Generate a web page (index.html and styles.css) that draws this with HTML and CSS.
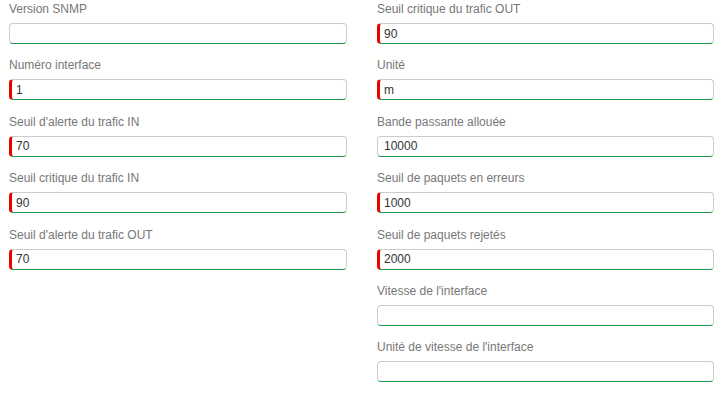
FILE: index.html
```html
<!DOCTYPE html>
<html lang="fr">
<head>
    <meta charset="UTF-8">
    <title>Interface SNMP</title>
    <link rel="stylesheet" href="styles.css">
</head>
<body>

    <!-- Formulaire interface -->
    <form class="form-grid">
        <div class="form-col">
            <div class="form-group">
                <label>Version SNMP</label>
                <input type="text" value="">
            </div>
            <div class="form-group">
                <label>Numéro interface</label>
                <input type="text" class="required" value="1">
            </div>
            <div class="form-group">
                <label>Seuil d'alerte du trafic IN</label>
                <input type="text" class="required" value="70">
            </div>
            <div class="form-group">
                <label>Seuil critique du trafic IN</label>
                <input type="text" class="required" value="90">
            </div>
            <div class="form-group">
                <label>Seuil d'alerte du trafic OUT</label>
                <input type="text" class="required" value="70">
            </div>
        </div>

        <div class="form-col">
            <div class="form-group">
                <label>Seuil critique du trafic OUT</label>
                <input type="text" class="required" value="90">
            </div>
            <div class="form-group">
                <label>Unité</label>
                <input type="text" class="required" value="m">
            </div>
            <div class="form-group">
                <label>Bande passante allouée</label>
                <input type="text" value="10000">
            </div>
            <div class="form-group">
                <label>Seuil de paquets en erreurs</label>
                <input type="text" class="required" value="1000">
            </div>
            <div class="form-group">
                <label>Seuil de paquets rejetés</label>
                <input type="text" class="required" value="2000">
            </div>
            <div class="form-group">
                <label>Vitesse de l'interface</label>
                <input type="text" value="">
            </div>
            <div class="form-group">
                <label>Unité de vitesse de l'interface</label>
                <input type="text" value="">
            </div>
        </div>
    </form>

</body>
</html>
```

FILE: styles.css
```css
* {
    margin: 0;
    padding: 0;
    box-sizing: border-box;
}

body {
    font-family: "Liberation Sans", Arial, sans-serif;
    font-size: 12px;
    background-color: #fff;
    color: #333;
}

/* Two column form */
.form-grid {
    display: grid;
    grid-template-columns: 338px 337px;
    column-gap: 30px;
    padding: 1px 11px 0 9px;
}

.form-group {
    display: flex;
    flex-direction: column;
    margin-bottom: 13.4px;
}

.form-group label {
    display: block;
    line-height: 17px;
    margin-bottom: 5px;
    color: #777;
}

.form-group input {
    height: 21px;
    width: 100%;
    padding: 0 6px;
    font-family: inherit;
    font-size: 12px;
    color: #333;
    border: 1px solid #ccc;
    border-bottom-color: #1e9a4b;
    border-radius: 4px;
    outline: none;
}

/* Required fields get a red left mark */
.form-group input.required {
    border-left: 3px solid #e00;
    padding-left: 4px;
}
```
